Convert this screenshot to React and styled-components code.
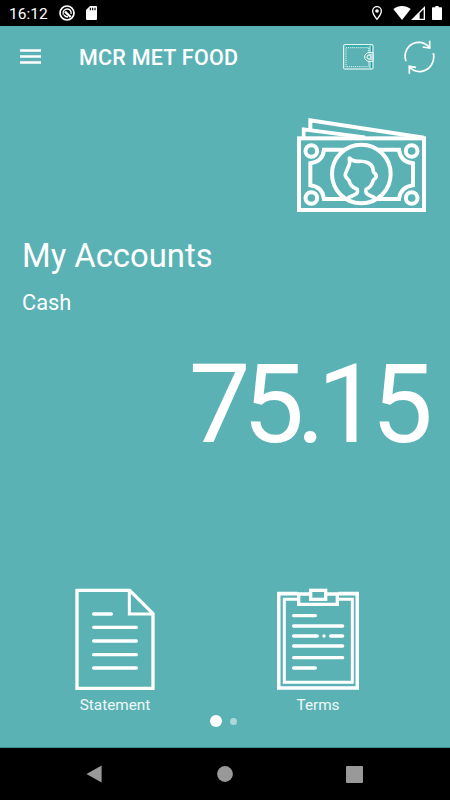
import React, { useState } from "react";
import styled, { createGlobalStyle } from "styled-components";

const App = () => {
  const [page, setPage] = useState(0);

  return (
    <>
      <GlobalStyle />
      <Screen>
        <StatusBar>
          <Clock>16:12</Clock>
          <StatusIcons>
            <AppBadgeIcon />
            <SdCardIcon />
          </StatusIcons>
          <SystemIcons />
        </StatusBar>
        <Header>
          <IconButton aria-label="menu">
            <MenuIcon />
          </IconButton>
          <Title>MCR MET FOOD</Title>
          <HeaderActions>
            <IconButton aria-label="wallet">
              <WalletIcon />
            </IconButton>
            <IconButton aria-label="refresh">
              <RefreshIcon />
            </IconButton>
          </HeaderActions>
        </Header>
        <Content>
          <MoneyRow>
            <MoneyIcon />
          </MoneyRow>
          <Heading>My Accounts</Heading>
          <AccountName>Cash</AccountName>
          <Balance>75.15</Balance>
          <Actions>
            <Action>
              <StatementIcon />
              <Label>Statement</Label>
            </Action>
            <Action>
              <TermsIcon />
              <Label>Terms</Label>
            </Action>
          </Actions>
          <Dots>
            {[0, 1].map((i) => (
              <Dot key={i} $active={page === i} onClick={() => setPage(i)} />
            ))}
          </Dots>
        </Content>
        <NavBar>
          <svg width="16" height="18" viewBox="0 0 16 18">
            <path d="M15.6 0.4V17.6L0.4 9Z" fill="#999" />
          </svg>
          <svg width="18" height="16" viewBox="0 0 18 16">
            <circle cx="10" cy="8" r="7.9" fill="#999" />
          </svg>
          <svg width="17" height="17" viewBox="0 0 17 17">
            <rect width="17" height="17" rx="1" fill="#999" />
          </svg>
        </NavBar>
      </Screen>
    </>
  );
};

const AppBadgeIcon = () => (
  <svg width="16" height="16" viewBox="0 0 48 48" fill="none" stroke="#fff">
    <circle cx="24" cy="24" r="21" strokeWidth="5" />
    <path d="M13 29C9 18 18 12 25 12c8 0 13 7 11 15" strokeWidth="4" />
    <path d="M18 20L35 36" strokeWidth="7" />
    <path d="M15 30c3 4 7 6 12 6" strokeWidth="4" />
  </svg>
);

const SdCardIcon = () => (
  <svg width="11" height="14" viewBox="0 0 33 42">
    <path d="M12 0H30q3 0 3 3V39q0 3-3 3H3q-3 0-3-3V12Z" fill="#fff" />
    <path d="M13 5v8M20 5v8M27 5v8" stroke="#000" strokeWidth="3.5" />
  </svg>
);

// location, wifi, signal and battery
const SystemIcons = () => (
  <svg width="70" height="14" viewBox="0 0 210 42">
    <path
      d="M15 2C8 2 2 7.5 2 15c0 9 13 25 13 25s13-16 13-25C28 7.5 22 2 15 2Z"
      fill="none"
      stroke="#fff"
      strokeWidth="4"
    />
    <circle cx="15" cy="15" r="5.5" fill="#fff" />
    <path d="M64 9C79-3 101-3 116 9L90 42Z" fill="#fff" />
    <path
      fillRule="evenodd"
      d="M159 0V42H117ZM155 10L143 22V38H155Z"
      fill="#fff"
    />
    <path
      d="M190 0h10v4h8q2 0 2 2v34q0 2-2 2h-26q-2 0-2-2V6q0-2 2-2h8Z"
      fill="#fff"
    />
  </svg>
);

const MenuIcon = () => (
  <svg width="21" height="17" viewBox="0 0 21 17">
    <path d="M0 1.5H21M0 7.5H21M0 13.5H21" stroke="#fff" strokeWidth="2.3" />
  </svg>
);

const WalletIcon = () => (
  <svg width="31" height="26" viewBox="38 131 93 78" fill="none" stroke="#fff">
    <rect x="40" y="133" width="88" height="73" rx="2" strokeWidth="3" />
    <path d="M46 137H122" stroke="#0aa8a4" strokeWidth="3" />
    <path d="M119 136V204" strokeWidth="2.5" />
    <path d="M123.5 137V203" stroke="#0aa8a4" strokeWidth="3.5" />
    <path
      d="M114 142H47V199H114M115 143V157M115 184V199"
      strokeWidth="2.8"
      strokeDasharray="2.8 3"
    />
    <path
      d="M128 157H116a13 13 0 0 0 0 26H128Z"
      fill="#5ab2b5"
      strokeWidth="3"
    />
    <circle cx="116" cy="170" r="6" strokeWidth="3" />
    <path d="M116 163h9v14h-9" strokeWidth="2" />
  </svg>
);

const RefreshIcon = () => (
  <svg
    width="32"
    height="34"
    viewBox="219 119 96 102"
    fill="none"
    stroke="#fff"
    strokeWidth="5"
  >
    <path d="M228 183C219 157 234 132 258 127C274 124 289 130 299 142" />
    <path d="M299 121V143L278 140" />
    <path d="M310 158C316 184 301 208 276 213C262 216 248 210 237 199" />
    <path d="M238 220V198L258 201" />
  </svg>
);

const MoneyIcon = () => (
  <svg
    width="130"
    height="96"
    viewBox="36 21 390 288"
    fill="none"
    stroke="#fff"
    strokeWidth="12"
  >
    <rect x="42" y="85" width="375" height="215" />
    <path d="M56 82V58L240 82" strokeWidth="11" />
    <path d="M76 57V31L417 83" strokeWidth="12" />
    <circle cx="79" cy="123" r="17.5" />
    <circle cx="380" cy="123" r="17.5" />
    <circle cx="79" cy="264" r="17.5" />
    <circle cx="380" cy="264" r="17.5" />
    <path d="M180 119H117Q114 155 76 160V226Q113 231 117 267H182" />
    <path d="M278 119H342Q346 155 384 160V226Q347 231 342 267H276" />
    <circle cx="229" cy="192" r="88" />
    <path
      d="M187 266C193 256 217 257 217 246V238C203 233 195 226 192 211C182 203 179 196 182 190L190 170C194 164 195 156 193 144C200 152 209 154 219 154C243 152 259 161 263 173L266 187C277 195 276 203 265 210C262 225 256 232 243 238V246C243 257 265 256 271 266"
      strokeWidth="11"
      strokeLinejoin="round"
    />
  </svg>
);

const StatementIcon = () => (
  <svg
    width="80"
    height="102"
    viewBox="30 24 240 306"
    fill="none"
    stroke="#fff"
    strokeWidth="10"
  >
    <path d="M194 31H36V325H264V101Z" />
    <path d="M193 29V102H266" strokeWidth="9" />
    <path
      d="M86 102H139M86 142H214M86 183H214M86 224H214M86 264H214"
      strokeLinecap="round"
    />
  </svg>
);

const TermsIcon = () => (
  <svg
    width="82"
    height="102"
    viewBox="36 24 246 306"
    fill="none"
    stroke="#fff"
    strokeWidth="10"
  >
    <path d="M98 41H41V324H277V41H220" strokeWidth="11" />
    <path d="M98 58H58V307H262V58H220" strokeWidth="9" />
    <path d="M134 42H101V73H217V42H185" />
    <rect x="137" y="31" width="45" height="27" />
    <path
      d="M86 107H151M86 138H233M86 168H157M177 168h0.01M197 168H233M86 198H233M86 233H233M86 264H151"
      strokeLinecap="round"
    />
  </svg>
);

const GlobalStyle = createGlobalStyle`
  body {
    margin: 0;
    background: #000;
  }
  * {
    box-sizing: border-box;
  }
  svg {
    display: block;
    flex-shrink: 0;
  }
`;

const Screen = styled.div`
  display: flex;
  flex-direction: column;
  width: 450px;
  height: 800px;
  overflow: hidden;
  background: #5ab2b5;
  color: #fff;
  font-family: Roboto, "Liberation Sans", sans-serif;
`;

const StatusBar = styled.div`
  display: flex;
  align-items: center;
  height: 26px;
  padding: 0 8px 0 9px;
  background: #000;
`;

const Clock = styled.span`
  width: 50px;
  padding-top: 2px;
  font-size: 15.5px;
  line-height: 24px;
`;

const StatusIcons = styled.div`
  display: flex;
  align-items: center;
  gap: 11px;
  flex: 1;
`;

const Header = styled.header`
  display: flex;
  align-items: center;
  height: 62px;
  padding: 0 15px 0 20px;
`;

const IconButton = styled.button`
  padding: 0;
  border: none;
  background: none;
  cursor: pointer;
`;

const Title = styled.h1`
  flex: 1;
  margin: 2px 0 0 38px;
  font-size: 21.5px;
  font-weight: 500;
  line-height: 28px;
  letter-spacing: 0.25px;
`;

const HeaderActions = styled.div`
  display: flex;
  align-items: center;
  gap: 29px;
`;

const Content = styled.main`
  display: flex;
  flex-direction: column;
  flex: 1;
  border-bottom: 1px solid #3f8d90;
`;

const MoneyRow = styled.div`
  display: flex;
  justify-content: flex-end;
  padding: 29px 23px 0 0;
`;

const Heading = styled.h2`
  margin: 23px 0 0 22px;
  font-size: 32.8px;
  font-weight: 400;
  line-height: 40px;
`;

const AccountName = styled.div`
  margin: 13px 0 0 22px;
  font-size: 21.8px;
  line-height: 28px;
`;

const Balance = styled.div`
  margin-top: 24px;
  padding-right: 25px;
  font-size: 110px;
  line-height: 128px;
  letter-spacing: -8px;
  text-align: right;
`;

const Actions = styled.div`
  display: flex;
  gap: 122px;
  margin-top: 119px;
  padding-left: 75px;
`;

const Action = styled.div`
  display: flex;
  flex-direction: column;
  align-items: center;
`;

const Label = styled.span`
  margin-top: 5px;
  font-size: 15.3px;
  line-height: 20px;
  color: #f0f8f8;
`;

const Dots = styled.div`
  display: flex;
  align-items: center;
  gap: 8px;
  height: 12px;
  padding-left: 210px;
`;

const Dot = styled.span`
  width: ${(props) => (props.$active ? 12 : 7)}px;
  height: ${(props) => (props.$active ? 12 : 7)}px;
  border-radius: 50%;
  background: ${(props) => (props.$active ? "#fff" : "#add8da")};
`;

const NavBar = styled.nav`
  display: flex;
  align-items: center;
  justify-content: space-between;
  height: 52px;
  padding: 0 87px 0 86px;
  background: #000;
`;

export default App;
